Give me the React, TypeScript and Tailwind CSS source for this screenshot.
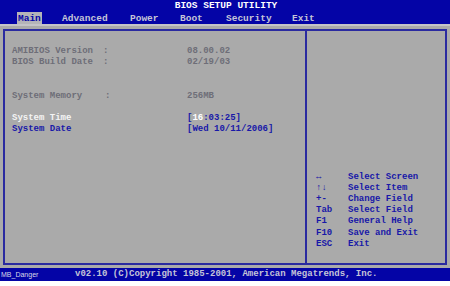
import React from 'react';

const mono = { fontFamily: '"Liberation Mono", "DejaVu Sans Mono", monospace' };

const tabs = [
  { name: 'Main', w: 'w-[44px]', active: true },
  { name: 'Advanced', w: 'w-[68px]' },
  { name: 'Power', w: 'w-[50px]' },
  { name: 'Boot', w: 'w-[46px]' },
  { name: 'Security', w: 'w-[66px]' },
  { name: 'Exit', w: 'w-[40px]' },
];

const help = [
  ['↔', 'Select Screen'],
  ['↑↓', 'Select Item'],
  ['+-', 'Change Field'],
  ['Tab', 'Select Field'],
  ['F1', 'General Help'],
  ['F10', 'Save and Exit'],
  ['ESC', 'Exit'],
];

export default function App() {
  return (
    <div className="w-[450px] h-[286px] bg-white flex flex-col font-bold" style={mono}>
      {/* header */}
      <div className="h-[24px] bg-[#0404a6] flex flex-col">
        <div className="h-[12px] flex items-center justify-center text-white text-[9.5px] leading-none pl-[2px]">
          BIOS SETUP UTILITY
        </div>
        <div className="h-[12px] flex items-end pl-[17px] text-[9.5px] leading-none">
          {tabs.map(t => (
            <div key={t.name} className={`${t.w} shrink-0 flex`}>
              <span className={t.active ? 'bg-[#b4b4b8] text-[#0404a6] px-px h-[12px] pt-[2px]' : 'text-[#c4c4d8] pl-px h-[12px] pt-[2px]'}>
                {t.name}
              </span>
            </div>
          ))}
        </div>
      </div>

      {/* body */}
      <div className="flex-1 bg-[#aaaaaa] flex flex-col">
        <div className="h-[2px] bg-[#c4c4c8]" />
        <div className="h-[3px]" />
        <div className="mx-[3px] h-[236px] border-2 border-[#2a2aa0] flex">
          <div className="w-[302px] border-r-2 border-[#2a2aa0] pl-[7px] pt-[15px] text-[9px] leading-[11px]">
            <div className="flex text-[#6e6e78]">
              <span className="w-[91px]">AMIBIOS Version</span>
              <span className="w-[84px]">:</span>
              <span>08.00.02</span>
            </div>
            <div className="flex text-[#6e6e78]">
              <span className="w-[91px]">BIOS Build Date</span>
              <span className="w-[84px]">:</span>
              <span>02/19/03</span>
            </div>
            <div className="flex text-[#6e6e78] mt-[23px]">
              <span className="w-[93px]">System Memory</span>
              <span className="w-[82px]">:</span>
              <span>256MB</span>
            </div>
            <div className="flex mt-[11px]">
              <span className="w-[175px] text-[#f4f4f4]">System Time</span>
              <span className="text-[#1818a8]">[<span className="text-white">16</span>:03:25]</span>
            </div>
            <div className="flex text-[#1818a8]">
              <span className="w-[175px]">System Date</span>
              <span>[Wed 10/11/2006]</span>
            </div>
          </div>
          <div className="flex-1 flex flex-col justify-end pb-[13px] pl-[9px] text-[9px] leading-[11.2px] text-[#1818a8]">
            {help.map(([k, d]) => (
              <div key={d} className="flex">
                <span className="w-[32px]">{k}</span>
                <span>{d}</span>
              </div>
            ))}
          </div>
        </div>
        <div className="h-[3px]" />
      </div>

      {/* footer */}
      <div className="h-[13px] bg-[#0404a6] flex items-center text-[9px] leading-none text-[#c4c4d8]">
        <span
          className="w-[75px] text-[7px] font-normal text-[#d8d8e8] pl-px"
          style={{ fontFamily: '"Liberation Sans", Arial, sans-serif' }}
        >
          MB_Danger
        </span>
        <span>v02.10 (C)Copyright 1985-2001, American Megatrends, Inc.</span>
      </div>
      <div className="h-[5px] bg-white" />
    </div>
  );
}
